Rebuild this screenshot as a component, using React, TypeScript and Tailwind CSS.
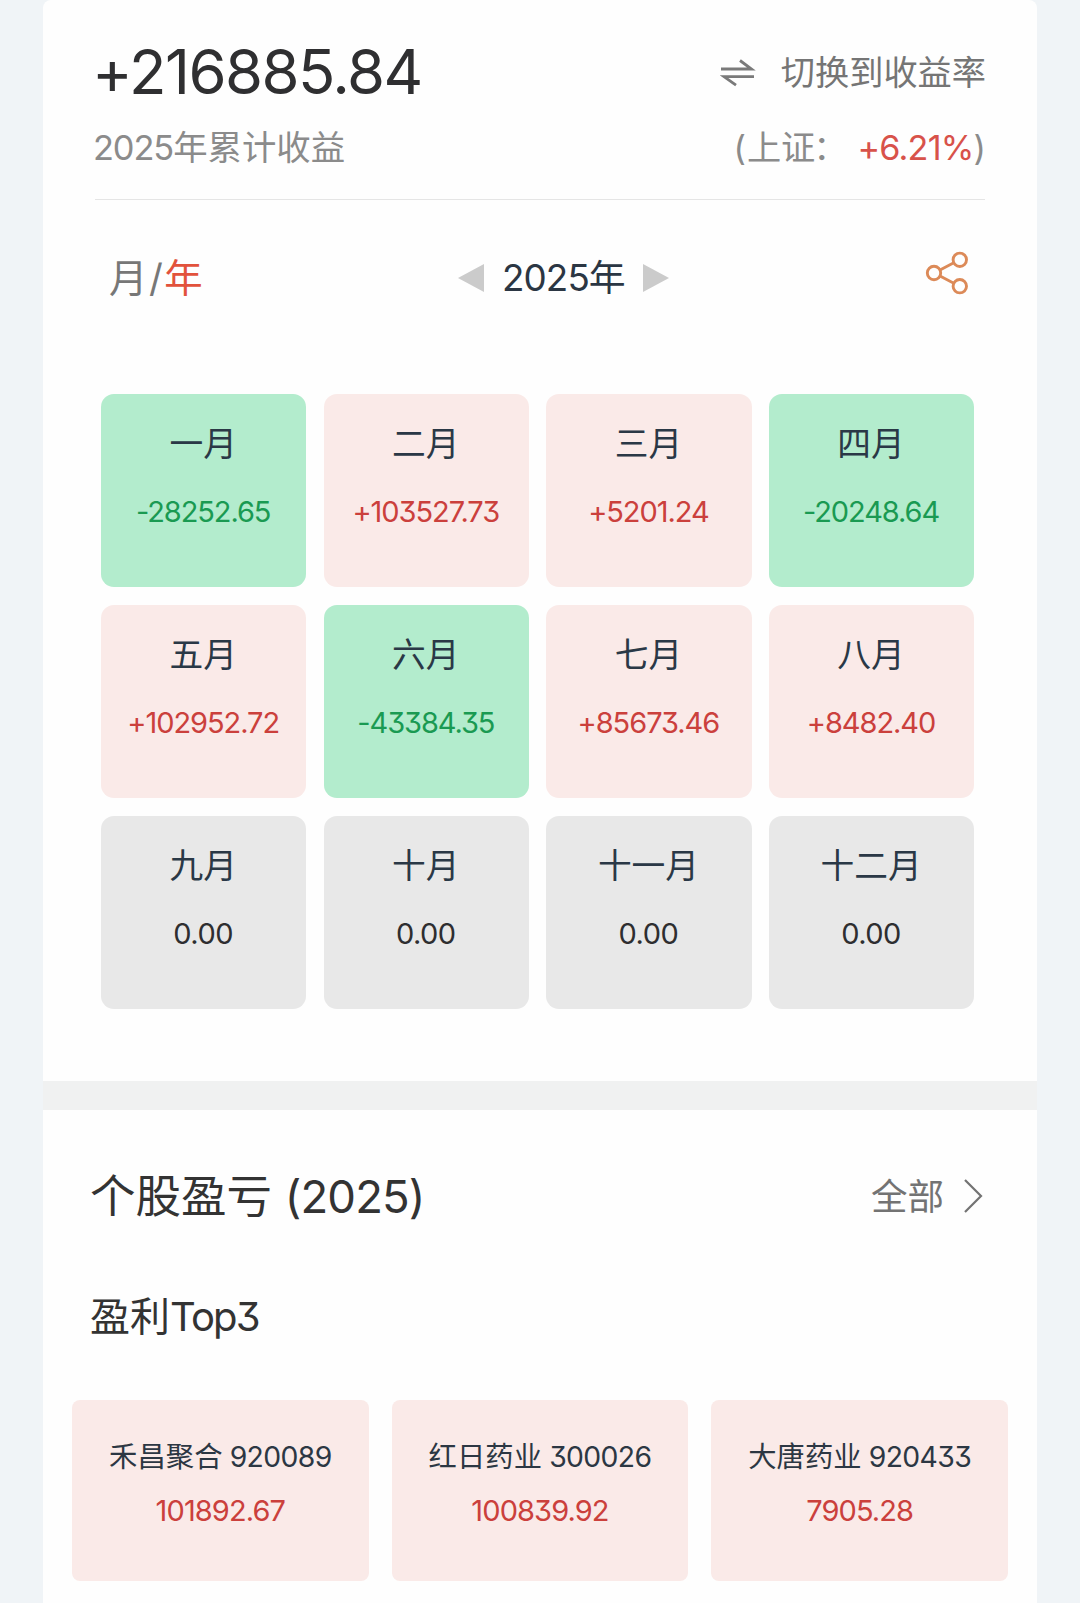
import React from "react";

type Tone = "up" | "down" | "flat";

const months: { name: string; value: string; tone: Tone }[] = [
  { name: "一月", value: "-28252.65", tone: "down" },
  { name: "二月", value: "+103527.73", tone: "up" },
  { name: "三月", value: "+5201.24", tone: "up" },
  { name: "四月", value: "-20248.64", tone: "down" },
  { name: "五月", value: "+102952.72", tone: "up" },
  { name: "六月", value: "-43384.35", tone: "down" },
  { name: "七月", value: "+85673.46", tone: "up" },
  { name: "八月", value: "+8482.40", tone: "up" },
  { name: "九月", value: "0.00", tone: "flat" },
  { name: "十月", value: "0.00", tone: "flat" },
  { name: "十一月", value: "0.00", tone: "flat" },
  { name: "十二月", value: "0.00", tone: "flat" },
];

const cellBg: Record<Tone, string> = {
  up: "bg-[#faeae8]",
  down: "bg-[#b3eccd]",
  flat: "bg-[#e8e8e8]",
};

const valueColor: Record<Tone, string> = {
  up: "tracking-[-1.05px] text-[#cb403c]",
  down: "tracking-[-1.1px] text-[#1a9a52]",
  flat: "tracking-[-0.5px] text-[#2e2e30]",
};

const stocks = [
  { name: "禾昌聚合", code: "920089", value: "101892.67" },
  { name: "红日药业", code: "300026", value: "100839.92" },
  { name: "大唐药业", code: "920433", value: "7905.28" },
];

function SwapIcon() {
  return (
    <svg width="36" height="28" viewBox="0 0 36 28" fill="none" stroke="#7a7a7a" strokeWidth="2.8">
      <path d="M1 10H31.5L20 1.5" />
      <path d="M34 17.6H4L16 26.2" />
    </svg>
  );
}

function ShareIcon() {
  return (
    <svg className="mr-[2px] -mt-[10px]" width="44" height="44" viewBox="0 0 44 44" fill="none" stroke="#dc8a58" strokeWidth="2.9">
      <circle cx="9" cy="22" r="6.7" />
      <circle cx="34.8" cy="8.8" r="6.7" />
      <circle cx="34.8" cy="35.2" r="6.7" />
      <path d="M15 19L28.8 11.8M15 25L28.8 32.2" />
    </svg>
  );
}

export default function App() {
  return (
    <div className="h-[1603px] w-[1080px] overflow-hidden bg-[#f0f4f7] px-[43px] font-['Inter','Noto_Sans_CJK_SC',sans-serif] font-normal [font-feature-settings:'cv09']">
      <div className="flex h-full flex-col rounded-t-lg bg-[#fefefe]">
        <section className="h-[1081px] pt-[39px]">
          <header className="mx-[52px] flex h-[161px] justify-between border-b border-[#e5e5e5]">
            <div className="flex flex-col">
              <div className="-ml-[3px] h-16 whitespace-nowrap text-[61.5px] leading-[65px] tracking-[-1.55px] text-[#2f2f31]">
                +216885.84
              </div>
              <div className="-ml-[2px] mt-[22px] h-[46px] whitespace-nowrap text-[34.4px] leading-[46px] text-[#8b8b8b]">
                <span className="tracking-[-1.1px]">2025</span>年累计收益
              </div>
            </div>
            <div className="-mr-px flex flex-col items-end">
              <div className="flex h-16 items-center gap-[25px] pt-[3px] text-[34.2px] text-[#757575]">
                <SwapIcon />
                <span className="leading-[64px]">切换到收益率</span>
              </div>
              <div className="mt-[22px] flex h-[46px] whitespace-nowrap text-[34.2px] leading-[46px] text-[#8b8b8b]">
                <span className="mr-[1px]">(</span>
                <span>上证</span>
                <span className="-ml-[2px]">：</span>
                <span className="ml-[10px] tracking-[-0.8px] text-[#d8524a]">+6.21%</span>
                <span>)</span>
              </div>
            </div>
          </header>

          <div className="mx-[66px] flex h-[56px] translate-y-[50px] items-center justify-between">
            <div className="flex text-[38.4px] leading-[54px] text-[#777777]">
              月<span className="mx-[1.5px]">/</span>
              <span className="text-[#e2523c]">年</span>
            </div>
            <div className="flex items-center gap-[17.5px] text-[36.8px] leading-[56px] text-[#2b3643]">
              <svg width="26" height="28" viewBox="0 0 26 28" fill="#cbcbcb">
                <path d="M26 0V28L0 14Z" />
              </svg>
              <span className="whitespace-nowrap">
                <span className="tracking-[-0.9px]">2025</span>年
              </span>
              <svg width="26" height="28" viewBox="0 0 26 28" fill="#cbcbcb">
                <path d="M0 0V28L26 14Z" />
              </svg>
            </div>
            <ShareIcon />
          </div>

          <div className="ml-[58px] mr-[62.8px] mt-[138px] grid h-[615px] grid-cols-4 grid-rows-3 gap-x-[17.3px] gap-y-[17.5px]">
            {months.map((m) => (
              <div key={m.name} className={`flex flex-col items-center rounded-[13px] pt-[25px] ${cellBg[m.tone]}`}>
                <div className="-ml-px h-[50px] text-[33.7px] leading-[50px] text-[#2a3846]">{m.name}</div>
                <div className={`-ml-px mt-[23px] h-[40px] whitespace-nowrap text-[29px] leading-[40px] ${valueColor[m.tone]}`}>
                  {m.value}
                </div>
              </div>
            ))}
          </div>
        </section>

        <div className="h-[29px] bg-[#f0f1f1]" />

        <section className="pt-[57px]">
          <div className="ml-[47px] mr-[54px] flex h-[60px] items-center justify-between">
            <h2 className="whitespace-nowrap text-[45.5px] leading-[60px] text-[#333333]">
              个股盈亏 <span className="tracking-[-0.9px]">(2025)</span>
            </h2>
            <div className="flex items-center gap-[20px] text-[36.5px] leading-[60px] text-[#737373]">
              全部
              <svg className="-mt-[2px]" width="19" height="34" viewBox="0 0 19 34" fill="none" stroke="#737373" strokeWidth="2.2">
                <path d="M1 1L17 17L1 33" />
              </svg>
            </div>
          </div>
          <h3 className="ml-[47px] mt-[60px] h-[60px] whitespace-nowrap text-[40px] leading-[60px] text-[#333333]">
            盈利<span className="tracking-[-1.8px]">Top3</span>
          </h3>
          <div className="mx-[29px] mt-[53px] grid h-[181px] grid-cols-3 gap-[23px]">
            {stocks.map((s) => (
              <div key={s.code} className="flex flex-col items-center rounded-lg bg-[#faeae8] pt-[37px]">
                <div className="h-[40px] whitespace-nowrap text-[28.3px] leading-[40px] tracking-[0.1px] text-[#2c3743]">
                  {s.name}
                  <span className="ml-[7px] tracking-[-0.6px]">{s.code}</span>
                </div>
                <div className="mt-[14px] h-[40px] text-[29px] leading-[40px] tracking-[-0.9px] text-[#cb403c]">
                  {s.value}
                </div>
              </div>
            ))}
          </div>
        </section>
      </div>
    </div>
  );
}
